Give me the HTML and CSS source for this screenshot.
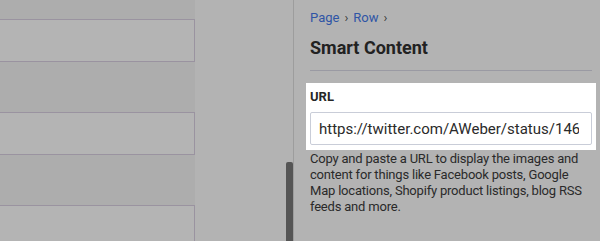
FILE: index.html
```html
<!DOCTYPE html>
<html lang="en">
<head>
    <meta charset="UTF-8">
    <meta name="viewport" content="width=device-width, initial-scale=1.0">
    <title>Smart Content</title>
    <link rel="stylesheet" href="styles.css">
</head>
<body>
    <div class="canvas">
        <div class="row-gap first"></div>
        <div class="row-box"></div>
        <div class="row-gap"></div>
        <div class="row-box"></div>
        <div class="row-gap"></div>
        <div class="row-box"></div>
    </div>

    <div class="gutter">
        <div class="thumb"></div>
    </div>

    <div class="panel">
        <div class="crumbs">
            <a href="#" class="crumb">Page</a>
            <span class="sep">›</span>
            <a href="#" class="crumb">Row</a>
            <span class="sep">›</span>
        </div>
        <h2 class="title">Smart Content</h2>
        <hr class="rule">

        <!-- highlighted field -->
        <div class="field">
            <label class="label" for="url">URL</label>
            <input type="text" id="url" class="url-input" value="https://twitter.com/AWeber/status/1465012345678901248">
        </div>
        <p class="help">Copy and paste a URL to display the images and content for things like Facebook posts, Google Map locations, Shopify product listings, blog RSS feeds and more.</p>
    </div>
</body>
</html>
```

FILE: styles.css
```css
body {
    margin: 0;
    display: flex;
    height: 100vh;
    overflow: hidden;
    background-color: #b3b3b3;
    font-family: Roboto, "Liberation Sans", sans-serif;
    color: #262626;
}
.canvas {
    width: 195px;
    flex-shrink: 0;
    display: flex;
    flex-direction: column;
    background-color: #adadad;
}
.row-gap {
    height: 50px;
    flex-shrink: 0;
}
.row-gap.first {
    height: 19px;
}
.row-box {
    height: 41px;
    flex-shrink: 0;
    background-color: #b4b4b4;
    border: 1px solid #9a93a0;
    border-left: none;
}
.gutter {
    width: 98px;
    flex-shrink: 0;
    display: flex;
    justify-content: flex-end;
    align-items: flex-end;
}
.thumb {
    width: 7px;
    height: 79px;
    background-color: #555555;
    border-radius: 2px 2px 0 0;
}
.panel {
    flex: 1;
    border-left: 1px solid #9d9d9d;
    padding: 10px 8px 0 16px;
}
.crumbs {
    font-size: 13px;
    line-height: 16px;
    display: flex;
    align-items: center;
    gap: 5px;
}
.crumb {
    color: #2f55a6;
    text-decoration: none;
}
.sep {
    color: #3a3a3a;
    font-size: 13px;
}
.title {
    margin: 11px 0 0;
    font-size: 18px;
    line-height: 22px;
    font-weight: 700;
    color: #222222;
}
.rule {
    margin: 11px 0 0;
    border: none;
    border-top: 1px solid #9a9aa3;
}
.field {
    margin: 12px -4px 0;
    padding: 6px 4px 5px;
    background-color: #ffffff;
}
.label {
    display: block;
    font-size: 13px;
    line-height: 16px;
    font-weight: 700;
    color: #262626;
}
.url-input {
    display: block;
    box-sizing: border-box;
    width: 100%;
    height: 33px;
    margin-top: 7px;
    padding: 0 12px 0 8px;
    border: 1px solid #c9cdd8;
    border-radius: 2px;
    font-family: Roboto, "Liberation Sans", sans-serif;
    font-size: 15px;
    color: #2a2a2a;
    outline: none;
}
.help {
    margin: 1px 0 0;
    font-size: 13px;
    line-height: 16px;
    letter-spacing: -0.2px;
    color: #2a2a2a;
}
```
